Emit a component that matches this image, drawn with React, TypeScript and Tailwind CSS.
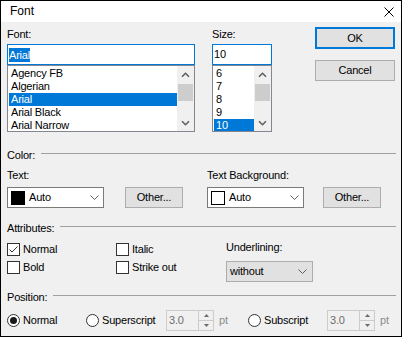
import React from "react";

const FONT = "font-['Liberation_Sans',Arial,sans-serif]";

function ScrollChevron({ down }: { down?: boolean }) {
  return (
    <svg width="9" height="6" viewBox="0 0 9 6" className="block">
      <path
        d={down ? "M1 1.2 L4.5 4.7 L8 1.2" : "M1 4.8 L4.5 1.3 L8 4.8"}
        fill="none"
        stroke="#606060"
        strokeWidth="1.6"
      />
    </svg>
  );
}

function ComboChevron() {
  return (
    <svg width="9" height="5" viewBox="0 0 9 5" className="block">
      <path d="M0.5 0.5 L4.5 4.5 L8.5 0.5" fill="none" stroke="#606060" strokeWidth="1" />
    </svg>
  );
}

function ListBox({ items, selected, w }: { items: string[]; selected: string; w: string }) {
  return (
    <div className={`flex h-[67px] ${w} border border-[#828790] bg-white`}>
      <div className="flex-1 min-w-0 flex flex-col pt-px pl-px overflow-hidden">
        {items.map((it) => (
          <div
            key={it}
            className={`h-[13px] shrink-0 leading-[13px] pl-[2px] whitespace-nowrap ${
              it === selected ? "bg-[#0078d7] text-white" : "text-black"
            }`}
          >
            {it}
          </div>
        ))}
      </div>
      <div className="w-[17px] shrink-0 bg-[#f0f0f0] flex flex-col">
        <div className="h-[17px] flex items-center justify-center">
          <ScrollChevron />
        </div>
        <div className="mt-px mx-px h-[17px] bg-[#cdcdcd]" />
        <div className="flex-1" />
        <div className="h-[17px] flex items-center justify-center">
          <ScrollChevron down />
        </div>
      </div>
    </div>
  );
}

function Header({ label }: { label: string }) {
  return (
    <div className="flex items-center h-[14px]">
      <span>{label}</span>
      <div className="flex-1 h-px bg-[#a0a0a0] ml-[6px] mb-[3px]" />
    </div>
  );
}

function ColorCombo({ swatch, w }: { swatch: string; w: string }) {
  return (
    <div className={`flex items-center h-[21px] ${w} border border-[#7a7a7a] bg-white`}>
      <div className={`ml-[3px] w-[14px] h-[14px] border border-black ${swatch}`} />
      <span className="ml-[4px] flex-1">Auto</span>
      <div className="mr-[4px]">
        <ComboChevron />
      </div>
    </div>
  );
}

function Button({ label, w, h = "h-[21px]", def }: { label: string; w: string; h?: string; def?: boolean }) {
  return (
    <div
      className={`flex items-center justify-center ${w} ${h} bg-[#e1e1e1] ${
        def ? "border-2 border-[#0078d7]" : "border border-[#adadad]"
      }`}
    >
      {label}
    </div>
  );
}

function Check({ checked, label }: { checked?: boolean; label: string }) {
  return (
    <div className="flex items-center h-[13px]">
      <div className="w-[13px] h-[13px] border border-[#333333] bg-white flex items-center justify-center">
        {checked && (
          <svg width="11" height="11" viewBox="0 0 11 11" className="block">
            <path d="M1.5 5.5 L4 8 L9.5 2.5" stroke="#333333" fill="none" strokeWidth="1" />
          </svg>
        )}
      </div>
      <span className="ml-[3px]">{label}</span>
    </div>
  );
}

function Radio({ checked, label }: { checked?: boolean; label: string }) {
  return (
    <div className="flex items-center">
      <div className="w-[13px] h-[13px] rounded-full border border-[#333333] bg-white flex items-center justify-center">
        {checked && <div className="w-[7px] h-[7px] rounded-full bg-[#1a1a1a]" />}
      </div>
      <span className="ml-[3px]">{label}</span>
    </div>
  );
}

function Spin() {
  return (
    <div className="flex h-[21px] w-[48px] border border-[#cccccc] bg-[#f0f0f0]">
      <div className="flex-1 pl-[2px] leading-[19px] text-[#6d6d6d]">3.0</div>
      <div className="w-[15px] flex flex-col border-l border-[#cccccc]">
        <div className="flex-1 flex items-center justify-center border-b border-[#cccccc]">
          <svg width="5" height="3" viewBox="0 0 5 3" className="block">
            <path d="M0 3 L2.5 0 L5 3 Z" fill="#6a6a6a" />
          </svg>
        </div>
        <div className="flex-1 flex items-center justify-center">
          <svg width="5" height="3" viewBox="0 0 5 3" className="block">
            <path d="M0 0 L2.5 3 L5 0 Z" fill="#6a6a6a" />
          </svg>
        </div>
      </div>
    </div>
  );
}

export default function App() {
  return (
    <div
      className={`w-[402px] h-[337px] border border-black bg-[#f0f0f0] flex flex-col ${FONT} text-[11px] leading-[13px] tracking-[-0.2px] text-black overflow-hidden`}
    >
      {/* Title bar */}
      <div className="h-[21px] shrink-0 bg-white flex items-center pl-[9px] pr-[7px]">
        <span className="text-[12px] tracking-normal flex-1">Font</span>
        <svg width="10" height="10" viewBox="0 0 10 10" className="block">
          <path d="M0.5 0.5 L9.5 9.5 M9.5 0.5 L0.5 9.5" stroke="#000" strokeWidth="1" />
        </svg>
      </div>

      <div className="flex flex-col pl-[6px] pr-[5px] pt-[5px]">
        {/* Row 1: font / size / buttons */}
        <div className="flex h-[105px]">
          <div className="flex flex-col w-[188px]">
            <div className="h-[17px] pt-px">Font:</div>
            <div className="h-[21px] border border-[#0078d7] bg-white flex items-center pl-px">
              <span className="bg-[#0078d7] text-white leading-[14px]">Arial</span>
            </div>
            <ListBox
              w="w-[188px]"
              items={["Agency FB", "Algerian", "Arial", "Arial Black", "Arial Narrow"]}
              selected="Arial"
            />
          </div>
          <div className="flex flex-col w-[60px] ml-[17px]">
            <div className="h-[17px] pt-px">Size:</div>
            <div className="h-[21px] border border-[#0078d7] bg-white flex items-center pl-px">10</div>
            <ListBox w="w-[60px]" items={["6", "7", "8", "9", "10"]} selected="10" />
          </div>
          <div className="flex flex-col ml-[43px]">
            <Button label="OK" w="w-[80px]" h="h-[22px]" def />
            <div className="mt-[11px]">
              <Button label="Cancel" w="w-[80px]" />
            </div>
          </div>
        </div>

        {/* Color */}
        <div className="mt-[16px]">
          <Header label="Color:" />
        </div>
        <div className="flex mt-[6px] h-[14px] items-center">
          <span className="w-[200px]">Text:</span>
          <span>Text Background:</span>
        </div>
        <div className="flex mt-[5px]">
          <ColorCombo swatch="bg-black" w="w-[97px]" />
          <div className="ml-[21px]">
            <Button label="Other..." w="w-[58px]" />
          </div>
          <div className="ml-[24px]">
            <ColorCombo swatch="bg-white" w="w-[97px]" />
          </div>
          <div className="ml-[19px]">
            <Button label="Other..." w="w-[58px]" />
          </div>
        </div>

        {/* Attributes */}
        <div className="mt-[13px]">
          <Header label="Attributes:" />
        </div>
        <div className="flex h-[47px]">
          <div className="flex flex-col w-[109px] pt-[8px] gap-[5px]">
            <Check checked label="Normal" />
            <Check label="Bold" />
          </div>
          <div className="flex flex-col w-[110px] pt-[8px] gap-[5px]">
            <Check label="Italic" />
            <Check label="Strike out" />
          </div>
          <div className="flex flex-col pt-[5px]">
            <div className="h-[14px] flex items-center">Underlining:</div>
            <div className="mt-[7px] h-[21px] w-[87px] border border-[#adadad] bg-[#e1e1e1] flex items-center pl-[3px] pr-[5px]">
              <span className="flex-1">without</span>
              <ComboChevron />
            </div>
          </div>
        </div>

        {/* Position */}
        <div className="mt-[8px]">
          <Header label="Position:" />
        </div>
        <div className="flex items-center mt-[6px] h-[21px]">
          <div className="w-[79px]">
            <Radio checked label="Normal" />
          </div>
          <div className="w-[80px]">
            <Radio label="Superscript" />
          </div>
          <Spin />
          <span className="ml-[5px] w-[29px] text-[#8c8c8c]">pt</span>
          <div className="w-[79px]">
            <Radio label="Subscript" />
          </div>
          <Spin />
          <span className="ml-[5px] text-[#8c8c8c]">pt</span>
        </div>
      </div>
    </div>
  );
}
